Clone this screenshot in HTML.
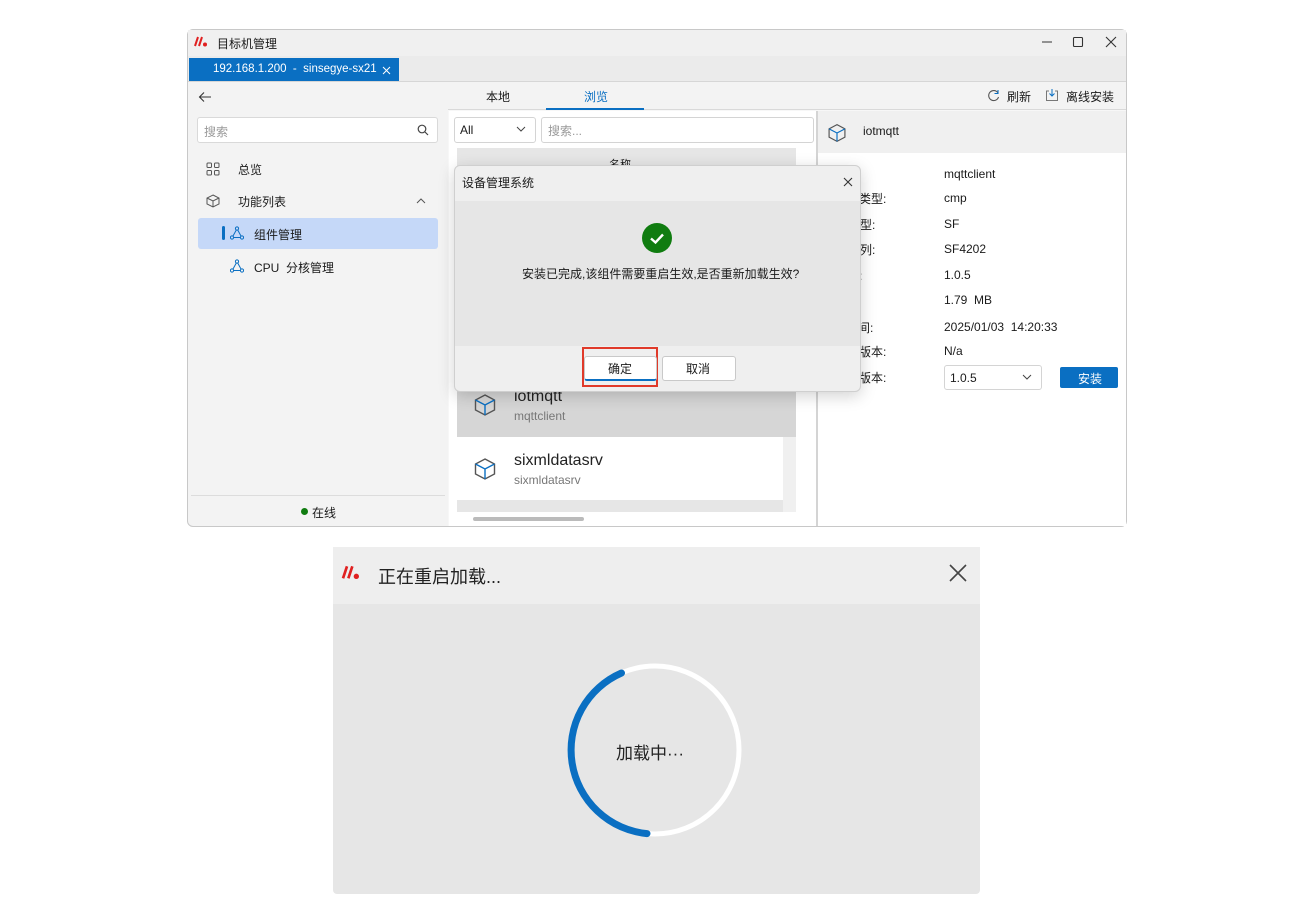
<!DOCTYPE html>
<html><head><meta charset="utf-8">
<style>
*{margin:0;padding:0;box-sizing:border-box}
body{width:1312px;height:904px;background:#fff;position:relative;overflow:hidden;font-family:"Liberation Sans","Noto Sans CJK SC",sans-serif;font-size:12px;color:#1a1a1a}
.a{position:absolute}
.t{position:absolute;white-space:nowrap}
</style></head><body>
<!-- main window -->
<div class="a" style="left:187px;top:29px;width:940px;height:498px;border:1px solid #c8c8c8;border-radius:6px;background:#f3f3f3;overflow:hidden">
</div>
<div class="a" style="left:188px;top:30px;width:938px;height:52px;background:#ebebeb"></div>
<div class="a" style="left:188px;top:30px;width:938px;height:26px;background:#f0f0f0"></div>
<!-- logo -->
<svg class="a" style="left:194px;top:36px" width="14" height="12" viewBox="0 0 14 12"><path d="M4 1L1 10M8 1L5 10" stroke="#e02020" stroke-width="2"/><circle cx="11" cy="8.5" r="2" fill="#e02020"/></svg>
<div class="t" style="left:217px;top:35px;font-size:12px">目标机管理</div>
<svg class="a" style="left:1040px;top:35px" width="80" height="14"><path d="M2 7H12" stroke="#333" stroke-width="1"/><rect x="33.5" y="2.5" width="9" height="9" rx="1" fill="none" stroke="#333" stroke-width="1.1"/><path d="M66 2L76 12M76 2L66 12" stroke="#333" stroke-width="1.1"/></svg>
<!-- tab -->
<div class="a" style="left:189px;top:58px;width:210px;height:23px;background:#0a6fc2"></div>
<div class="t" style="left:213px;top:63px;color:#fff;font-size:11.5px">192.168.1.200&nbsp; - &nbsp;sinsegye-sx21</div>
<svg class="a" style="left:382px;top:66px" width="9" height="9"><path d="M1 1L8 8M8 1L1 8" stroke="#fff" stroke-width="1"/></svg>
<div class="a" style="left:188px;top:81px;width:938px;height:1px;background:#d6d6d6"></div>
<!-- sidebar -->
<svg class="a" style="left:198px;top:91px" width="14" height="12"><path d="M13 6H2M6 1.5L1.5 6L6 10.5" fill="none" stroke="#333" stroke-width="1.1"/></svg>
<div class="a" style="left:197px;top:117px;width:241px;height:26px;background:#fff;border:1px solid #d9d9d9;border-radius:3px"></div>
<div class="t" style="left:204px;top:123px;color:#999">搜索</div>
<svg class="a" style="left:417px;top:124px" width="12" height="12"><circle cx="5" cy="5" r="3.8" stroke="#444" fill="none" stroke-width="1.2"/><path d="M8 8L11 11" stroke="#444" stroke-width="1.2"/></svg>
<svg class="a" style="left:206px;top:162px" width="14" height="14"><rect x="1" y="1" width="4.5" height="4.5" rx="1" fill="none" stroke="#555"/><rect x="8.5" y="1" width="4.5" height="4.5" rx="1" fill="none" stroke="#555"/><rect x="1" y="8.5" width="4.5" height="4.5" rx="1" fill="none" stroke="#555"/><rect x="8.5" y="8.5" width="4.5" height="4.5" rx="1" fill="none" stroke="#555"/></svg>
<div class="t" style="left:238px;top:161px">总览</div>
<svg class="a" style="left:206px;top:194px" width="14" height="14" viewBox="0 0 14 14"><path d="M7 1L13 4V10L7 13L1 10V4Z M1 4L7 7L13 4 M7 7V13" fill="none" stroke="#555"/></svg>
<div class="t" style="left:238px;top:193px">功能列表</div>
<svg class="a" style="left:416px;top:198px" width="10" height="6"><path d="M1 5L5 1L9 5" fill="none" stroke="#555"/></svg>
<div class="a" style="left:198px;top:218px;width:240px;height:31px;background:#c5d8f8;border-radius:3px"></div>
<div class="a" style="left:222px;top:226px;width:3px;height:14px;background:#0a6fc2;border-radius:2px"></div>
<svg class="a" style="left:230px;top:226px" width="14" height="14" viewBox="0 0 14 14"><circle cx="7" cy="2.5" r="1.6" fill="none" stroke="#0a6fc2"/><circle cx="2" cy="11.5" r="1.6" fill="none" stroke="#0a6fc2"/><circle cx="12" cy="11.5" r="1.6" fill="none" stroke="#0a6fc2"/><path d="M6.3 4L3 10M7.7 4L11 10M3.6 11.5H10.4" stroke="#0a6fc2" fill="none"/></svg>
<div class="t" style="left:254px;top:226px">组件管理</div>
<svg class="a" style="left:230px;top:259px" width="14" height="14" viewBox="0 0 14 14"><circle cx="7" cy="2.5" r="1.6" fill="none" stroke="#0a6fc2"/><circle cx="2" cy="11.5" r="1.6" fill="none" stroke="#0a6fc2"/><circle cx="12" cy="11.5" r="1.6" fill="none" stroke="#0a6fc2"/><path d="M6.3 4L3 10M7.7 4L11 10M3.6 11.5H10.4" stroke="#0a6fc2" fill="none"/></svg>
<div class="t" style="left:254px;top:259px">CPU&nbsp; 分核管理</div>
<div class="a" style="left:191px;top:495px;width:254px;height:1px;background:#dcdcdc"></div>
<div class="a" style="left:301px;top:508px;width:7px;height:7px;border-radius:50%;background:#107c10"></div>
<div class="t" style="left:312px;top:504px">在线</div>
<!-- middle -->
<div class="a" style="left:448px;top:82px;width:678px;height:444px;background:#f7f7f7"></div>
<div class="a" style="left:448px;top:82px;width:678px;height:28px;background:#f3f3f3;border-bottom:1px solid #d9d9d9"></div>
<div class="t" style="left:486px;top:88px">本地</div>
<div class="t" style="left:584px;top:88px;color:#0a6fc2">浏览</div>
<div class="a" style="left:546px;top:108px;width:98px;height:2px;background:#0a6fc2"></div>
<svg class="a" style="left:987px;top:89px" width="13" height="13" viewBox="0 0 13 13"><path d="M11 4A5 5 0 1 0 11.5 8" fill="none" stroke="#555" stroke-width="1.1"/><path d="M11 1V4.5H7.5" fill="none" stroke="#0a6fc2" stroke-width="1.1"/></svg>
<div class="t" style="left:1007px;top:88px">刷新</div>
<svg class="a" style="left:1045px;top:88px" width="14" height="14" viewBox="0 0 14 14"><path d="M4 3H1.5V12.5H12.5V3H10" fill="none" stroke="#777"/><path d="M7 1V8M4.5 5.5L7 8L9.5 5.5" fill="none" stroke="#0a6fc2"/></svg>
<div class="t" style="left:1066px;top:88px">离线安装</div>
<div class="a" style="left:449px;top:111px;width:367px;height:415px;background:#fff"></div>
<div class="a" style="left:454px;top:117px;width:82px;height:26px;background:#fff;border:1px solid #d4d4d4;border-radius:3px"></div>
<div class="t" style="left:460px;top:123px">All</div>
<svg class="a" style="left:516px;top:126px" width="10" height="7"><path d="M1 1L5 5L9 1" fill="none" stroke="#444"/></svg>
<div class="a" style="left:541px;top:117px;width:273px;height:26px;background:#fff;border:1px solid #d4d4d4;border-radius:3px"></div>
<div class="t" style="left:548px;top:122px;color:#999">搜索...</div>
<div class="a" style="left:457px;top:148px;width:339px;height:364px;background:#e6e6e6"></div>
<div class="t" style="left:609px;top:156px;font-size:11px">名称</div>
<div class="a" style="left:457px;top:380px;width:339px;height:57px;background:#d6d6d6"></div>
<div class="a" style="left:457px;top:437px;width:326px;height:63px;background:#fff"></div>
<div class="a" style="left:783px;top:437px;width:13px;height:75px;background:#f0f0f0"></div>
<svg class="a" style="left:473px;top:393px" width="24" height="24" viewBox="0 0 24 24"><path d="M12 2L21.5 7V17L12 22L2.5 17V7Z" fill="none" stroke="#555" stroke-width="1.4"/><path d="M2.5 7L12 12L21.5 7M12 12V22" fill="none" stroke="#0a6fc2" stroke-width="1.4"/></svg>
<div class="t" style="left:514px;top:388px;font-size:16px;color:#222">iotmqtt</div>
<div class="t" style="left:514px;top:409px;color:#777">mqttclient</div>
<svg class="a" style="left:473px;top:457px" width="24" height="24" viewBox="0 0 24 24"><path d="M12 2L21.5 7V17L12 22L2.5 17V7Z" fill="none" stroke="#555" stroke-width="1.4"/><path d="M2.5 7L12 12L21.5 7M12 12V22" fill="none" stroke="#0a6fc2" stroke-width="1.4"/></svg>
<div class="t" style="left:514px;top:452px;font-size:16px;color:#222">sixmldatasrv</div>
<div class="t" style="left:514px;top:473px;color:#777">sixmldatasrv</div>
<div class="a" style="left:473px;top:517px;width:111px;height:4px;border-radius:2px;background:#bbb"></div>
<!-- right panel -->
<div class="a" style="left:816px;top:111px;width:2px;height:415px;background:#d4d4d4"></div>
<div class="a" style="left:818px;top:111px;width:308px;height:42px;background:#f0f0f0"></div>
<div class="a" style="left:818px;top:153px;width:308px;height:373px;background:#fff"></div>
<svg class="a" style="left:827px;top:123px" width="20" height="20" viewBox="0 0 24 24"><path d="M12 2L21.5 7V17L12 22L2.5 17V7Z" fill="none" stroke="#555" stroke-width="1.4"/><path d="M2.5 7L12 12L21.5 7M12 12V22" fill="none" stroke="#0a6fc2" stroke-width="1.4"/></svg>
<div class="t" style="left:863px;top:124px">iotmqtt</div>
<div class="t" style="left:835px;top:190px">组件类型:</div>
<div class="t" style="left:848px;top:216px">机型:</div>
<div class="t" style="left:848px;top:241px">系列:</div>
<div class="t" style="left:835px;top:267px">版本:</div>
<div class="t" style="left:822px;top:319px">更新时间:</div>
<div class="t" style="left:835px;top:343px">当前版本:</div>
<div class="t" style="left:835px;top:369px">可选版本:</div>
<div class="t" style="left:944px;top:167px">mqttclient</div>
<div class="t" style="left:944px;top:191px">cmp</div>
<div class="t" style="left:944px;top:217px">SF</div>
<div class="t" style="left:944px;top:242px">SF4202</div>
<div class="t" style="left:944px;top:268px">1.0.5</div>
<div class="t" style="left:944px;top:293px">1.79&nbsp; MB</div>
<div class="t" style="left:944px;top:320px">2025/01/03&nbsp; 14:20:33</div>
<div class="t" style="left:944px;top:344px">N/a</div>
<div class="a" style="left:944px;top:365px;width:98px;height:25px;border:1px solid #d4d4d4;border-radius:3px;background:#fff"></div>
<div class="t" style="left:950px;top:371px">1.0.5</div>
<svg class="a" style="left:1022px;top:374px" width="10" height="7"><path d="M1 1L5 5L9 1" fill="none" stroke="#444"/></svg>
<div class="a" style="left:1060px;top:367px;width:58px;height:21px;background:#0a6fc2;border-radius:2px"></div>
<div class="t" style="left:1078px;top:370px;color:#fff">安装</div>
<!-- dialog -->
<div class="a" style="left:454px;top:165px;width:407px;height:227px;border:1px solid #cfcfcf;border-radius:6px;background:#efefef;box-shadow:0 4px 16px rgba(0,0,0,.18);overflow:hidden">
 <div class="a" style="left:0;top:35px;width:407px;height:145px;background:#e6e6e6"></div>
</div>
<div class="t" style="left:462px;top:174px">设备管理系统</div>
<svg class="a" style="left:843px;top:177px" width="10" height="10"><path d="M1 1L9 9M9 1L1 9" stroke="#333" stroke-width="1.1"/></svg>
<div class="a" style="left:642px;top:223px;width:30px;height:30px;border-radius:50%;background:#107c10"></div>
<svg class="a" style="left:642px;top:223px" width="30" height="30"><path d="M9 15.5L13.5 19.5L21 11.5" fill="none" stroke="#fff" stroke-width="2.4"/></svg>
<div class="t" style="left:522px;top:265px">安装已完成,该组件需要重启生效,是否重新加载生效?</div>
<div class="a" style="left:582px;top:347px;width:76px;height:40px;border:2px solid #e03a2a"></div>
<div class="a" style="left:584px;top:356px;width:73px;height:25px;background:#fff;border:1px solid #c9c9c9;border-bottom:2px solid #0a6fc2;border-radius:3px"></div>
<div class="t" style="left:608px;top:360px">确定</div>
<div class="a" style="left:662px;top:356px;width:74px;height:25px;background:#fff;border:1px solid #c9c9c9;border-radius:3px"></div>
<div class="t" style="left:686px;top:360px">取消</div>
<!-- bottom dialog -->
<div class="a" style="left:333px;top:547px;width:647px;height:347px;background:#e6e6e6;border-radius:0 0 4px 4px"></div>
<div class="a" style="left:333px;top:547px;width:647px;height:57px;background:#eeeeee"></div>
<svg class="a" style="left:341px;top:565px" width="20" height="16" viewBox="0 0 14 12"><path d="M4 1L1 10M8 1L5 10" stroke="#e02020" stroke-width="2"/><circle cx="11" cy="8.5" r="2" fill="#e02020"/></svg>
<div class="t" style="left:378px;top:563px;font-size:18px;color:#222">正在重启加载...</div>
<svg class="a" style="left:949px;top:564px" width="18" height="18"><path d="M1 1L17 17M17 1L1 17" stroke="#444" stroke-width="1.6"/></svg>
<svg class="a" style="left:565px;top:660px" width="180" height="180" viewBox="0 0 180 180">
 <circle cx="90" cy="90" r="84" fill="none" stroke="#fff" stroke-width="5"/>
 <path d="M56.5 13A84 84 0 0 0 82 173.6" fill="none" stroke="#0a6fc2" stroke-width="7" stroke-linecap="round"/>
</svg>
<div class="t" style="left:616px;top:739px;font-size:17px;color:#222">加载中···</div>
</body></html>
